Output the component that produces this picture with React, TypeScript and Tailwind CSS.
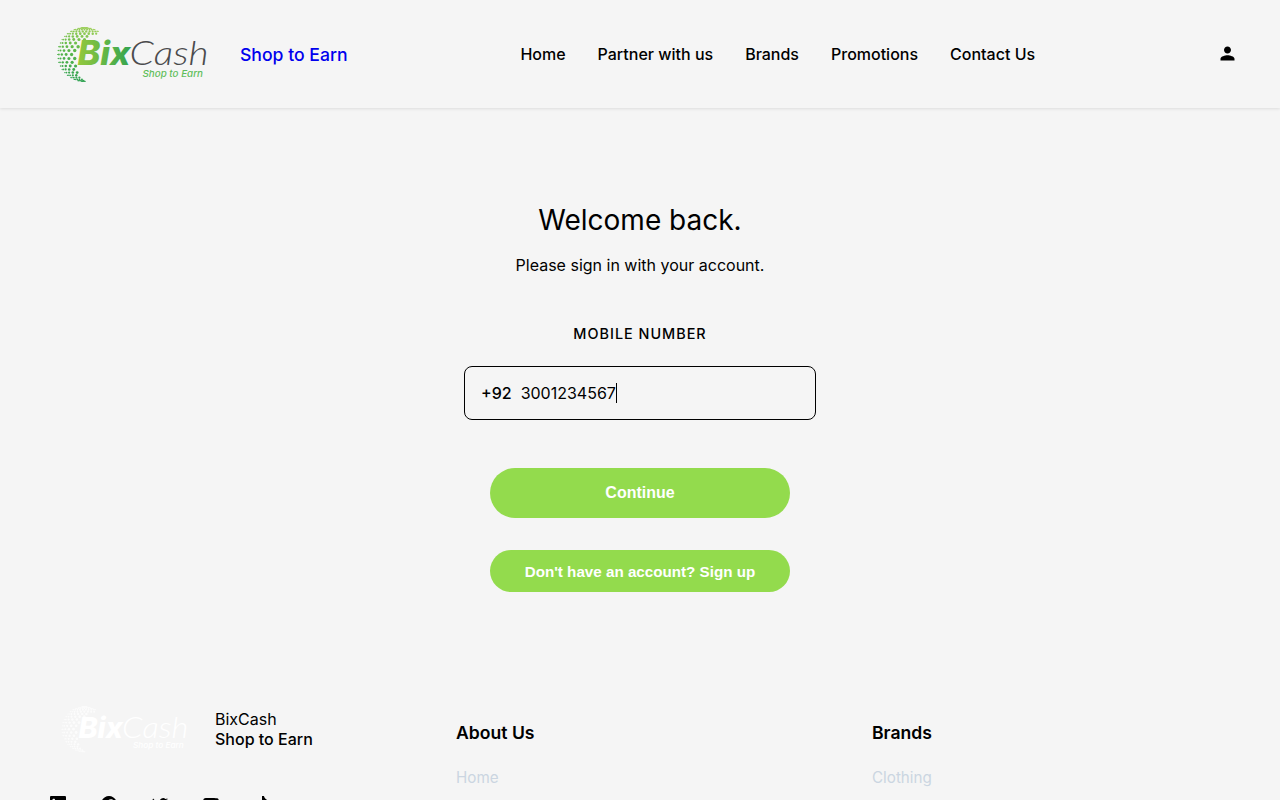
import { BsLinkedin, BsFacebook, BsTwitter, BsYoutube, BsTiktok } from "react-icons/bs";
import { MdPerson } from "react-icons/md";

type Dot = { x: number; y: number; r: number };

function sphereDots(): Dot[] {
  const dots: Dot[] = [];
  const cx = 44.5;
  const cy = 39.5;
  const radius = 27;
  for (let row = -10; row <= 10; row++) {
    const lat = (row / 10.7) * (Math.PI / 2);
    const y = cy + radius * Math.sin(lat);
    for (let col = -6; col <= 6; col++) {
      const lon = ((col + (row % 2 === 0 ? 0 : 0.5)) / 6.3) * (Math.PI / 2);
      if (Math.abs(lon) > Math.PI / 2) continue;
      const x = cx + radius * Math.cos(lat) * Math.sin(lon);
      if (Math.hypot(x - 61.5, y - 45) < 26.5 || x > 64) continue;
      const facing = Math.cos(lat) * Math.cos(lon);
      dots.push({ x, y, r: 0.5 + 1.3 * facing });
    }
  }
  return dots;
}

const dots = sphereDots();

function Logo({ id, white, className }: { id: string; white?: boolean; className: string }) {
  return (
    <svg viewBox="0 0 180 75" className={className} role="img" aria-label="BixCash">
      <defs>
        <linearGradient id={`${id}-globe`} gradientUnits="userSpaceOnUse" x1="48" y1="10" x2="36" y2="66">
          <stop offset="0" stopColor="#a3d15a" />
          <stop offset="0.45" stopColor="#5fb947" />
          <stop offset="1" stopColor="#2fa152" />
        </linearGradient>
        <linearGradient id={`${id}-word`} gradientUnits="userSpaceOnUse" x1="37" y1="0" x2="92" y2="0">
          <stop offset="0" stopColor="#95c93d" />
          <stop offset="1" stopColor="#32a350" />
        </linearGradient>
      </defs>
      <g fill={white ? "#ffffff" : `url(#${id}-globe)`} opacity={white ? 0.75 : 1}>
        {dots.map((d, i) => (
          <circle key={i} cx={d.x} cy={d.y} r={d.r} />
        ))}
      </g>
      <text x="37.500" y="50" fontFamily="Inter, sans-serif" fontWeight="800" fontStyle="italic" fontSize="33.500" textLength="53" lengthAdjust="spacingAndGlyphs" fill={white ? "#ffffff" : `url(#${id}-word)`}>Bix</text>
      <text x="89.500" y="50" fontFamily="Lato, sans-serif" fontWeight="300" fontStyle="italic" fontSize="34" textLength="79" lengthAdjust="spacingAndGlyphs" fill={white ? "#ffffff" : "#4b4b4d"}>Cash</text>
      <text x="102.500" y="62" fontFamily="Inter, sans-serif" fontWeight="500" fontStyle="italic" fontSize="9.200" textLength="60.500" lengthAdjust="spacingAndGlyphs" fill={white ? "#ffffff" : "#5fbe5b"}>Shop to Earn</text>
    </svg>
  );
}

const nav = ["Home", "Partner with us", "Brands", "Promotions", "Contact Us"];

export default function App() {
  return (
    <div className="h-[800px] overflow-hidden bg-[#f5f5f5] font-['Inter',sans-serif] text-base text-black">
      <header className="flex h-[108px] items-center bg-[#f5f5f5] pl-10 shadow-[0_1px_3px_rgba(0,0,0,0.1)]">
        <Logo id="head" className="-mt-[3px] h-[75px] w-[180px] shrink-0" />
        <a className="mt-[3px] ml-5 w-[280.400px] text-[17.600px] font-medium text-[#0000ee]">Shop to Earn</a>
        <nav className="flex flex-1 gap-8 font-medium">
          {nav.map((item) => (
            <a key={item} className="whitespace-nowrap">{item}</a>
          ))}
        </nav>
        <MdPerson className="-mt-px mr-[42px] size-[21px]" />
      </header>

      <main className="flex h-[598px] flex-col items-center pt-[92px]">
        <h1 className="text-[28px] leading-10">Welcome back.</h1>
        <p className="mt-[13px] leading-6">Please sign in with your account.</p>
        <label className="mt-[47px] text-[14.400px] leading-5 font-medium tracking-[1px]">MOBILE NUMBER</label>
        <div className="mt-[22px] flex h-[54px] w-[352px] items-center rounded-lg border border-black px-4">
          <span className="font-medium">+92</span>
          <span className="ml-[9px]">3001234567</span>
          <span className="h-5 w-px bg-black" />
        </div>
        <button className="mt-12 h-[50px] w-[300px] rounded-full bg-[#93db4d] font-['Liberation_Sans',sans-serif] font-bold text-white">Continue</button>
        <button className="mt-8 h-[42px] w-[300px] rounded-full bg-[#93db4d] pt-0.5 font-['Liberation_Sans',sans-serif] text-[15.200px] font-bold text-white">Don't have an account? Sign up</button>
      </main>

      <footer className="flex pl-10">
        <section className="w-[416px] shrink-0">
          <div className="flex h-[50px] items-start">
            <Logo id="foot" white className="-mt-[10px] ml-[7px] h-[63px] w-[151px] shrink-0" />
            <div className="mt-[3px] ml-[17px] leading-5">
              <p>BixCash</p>
              <p className="font-medium">Shop to Earn</p>
            </div>
          </div>
          <div className="mt-10 flex gap-[35px] pl-[10px]">
            <BsLinkedin className="size-4" />
            <BsFacebook className="size-4" />
            <BsTwitter className="size-4" />
            <BsYoutube className="size-4" />
            <BsTiktok className="-ml-px size-4" />
          </div>
        </section>
        <section className="w-[416px] shrink-0 pt-[15px]">
          <h2 className="text-[17.600px] leading-6 font-semibold">About Us</h2>
          <a className="mt-[21px] block text-[15.200px] leading-6 text-[#cbd5e1]">Home</a>
        </section>
        <section className="pt-[15px]">
          <h2 className="text-[17.600px] leading-6 font-semibold">Brands</h2>
          <a className="mt-[21px] block text-[15.200px] leading-6 text-[#cbd5e1]">Clothing</a>
        </section>
      </footer>
    </div>
  );
}
